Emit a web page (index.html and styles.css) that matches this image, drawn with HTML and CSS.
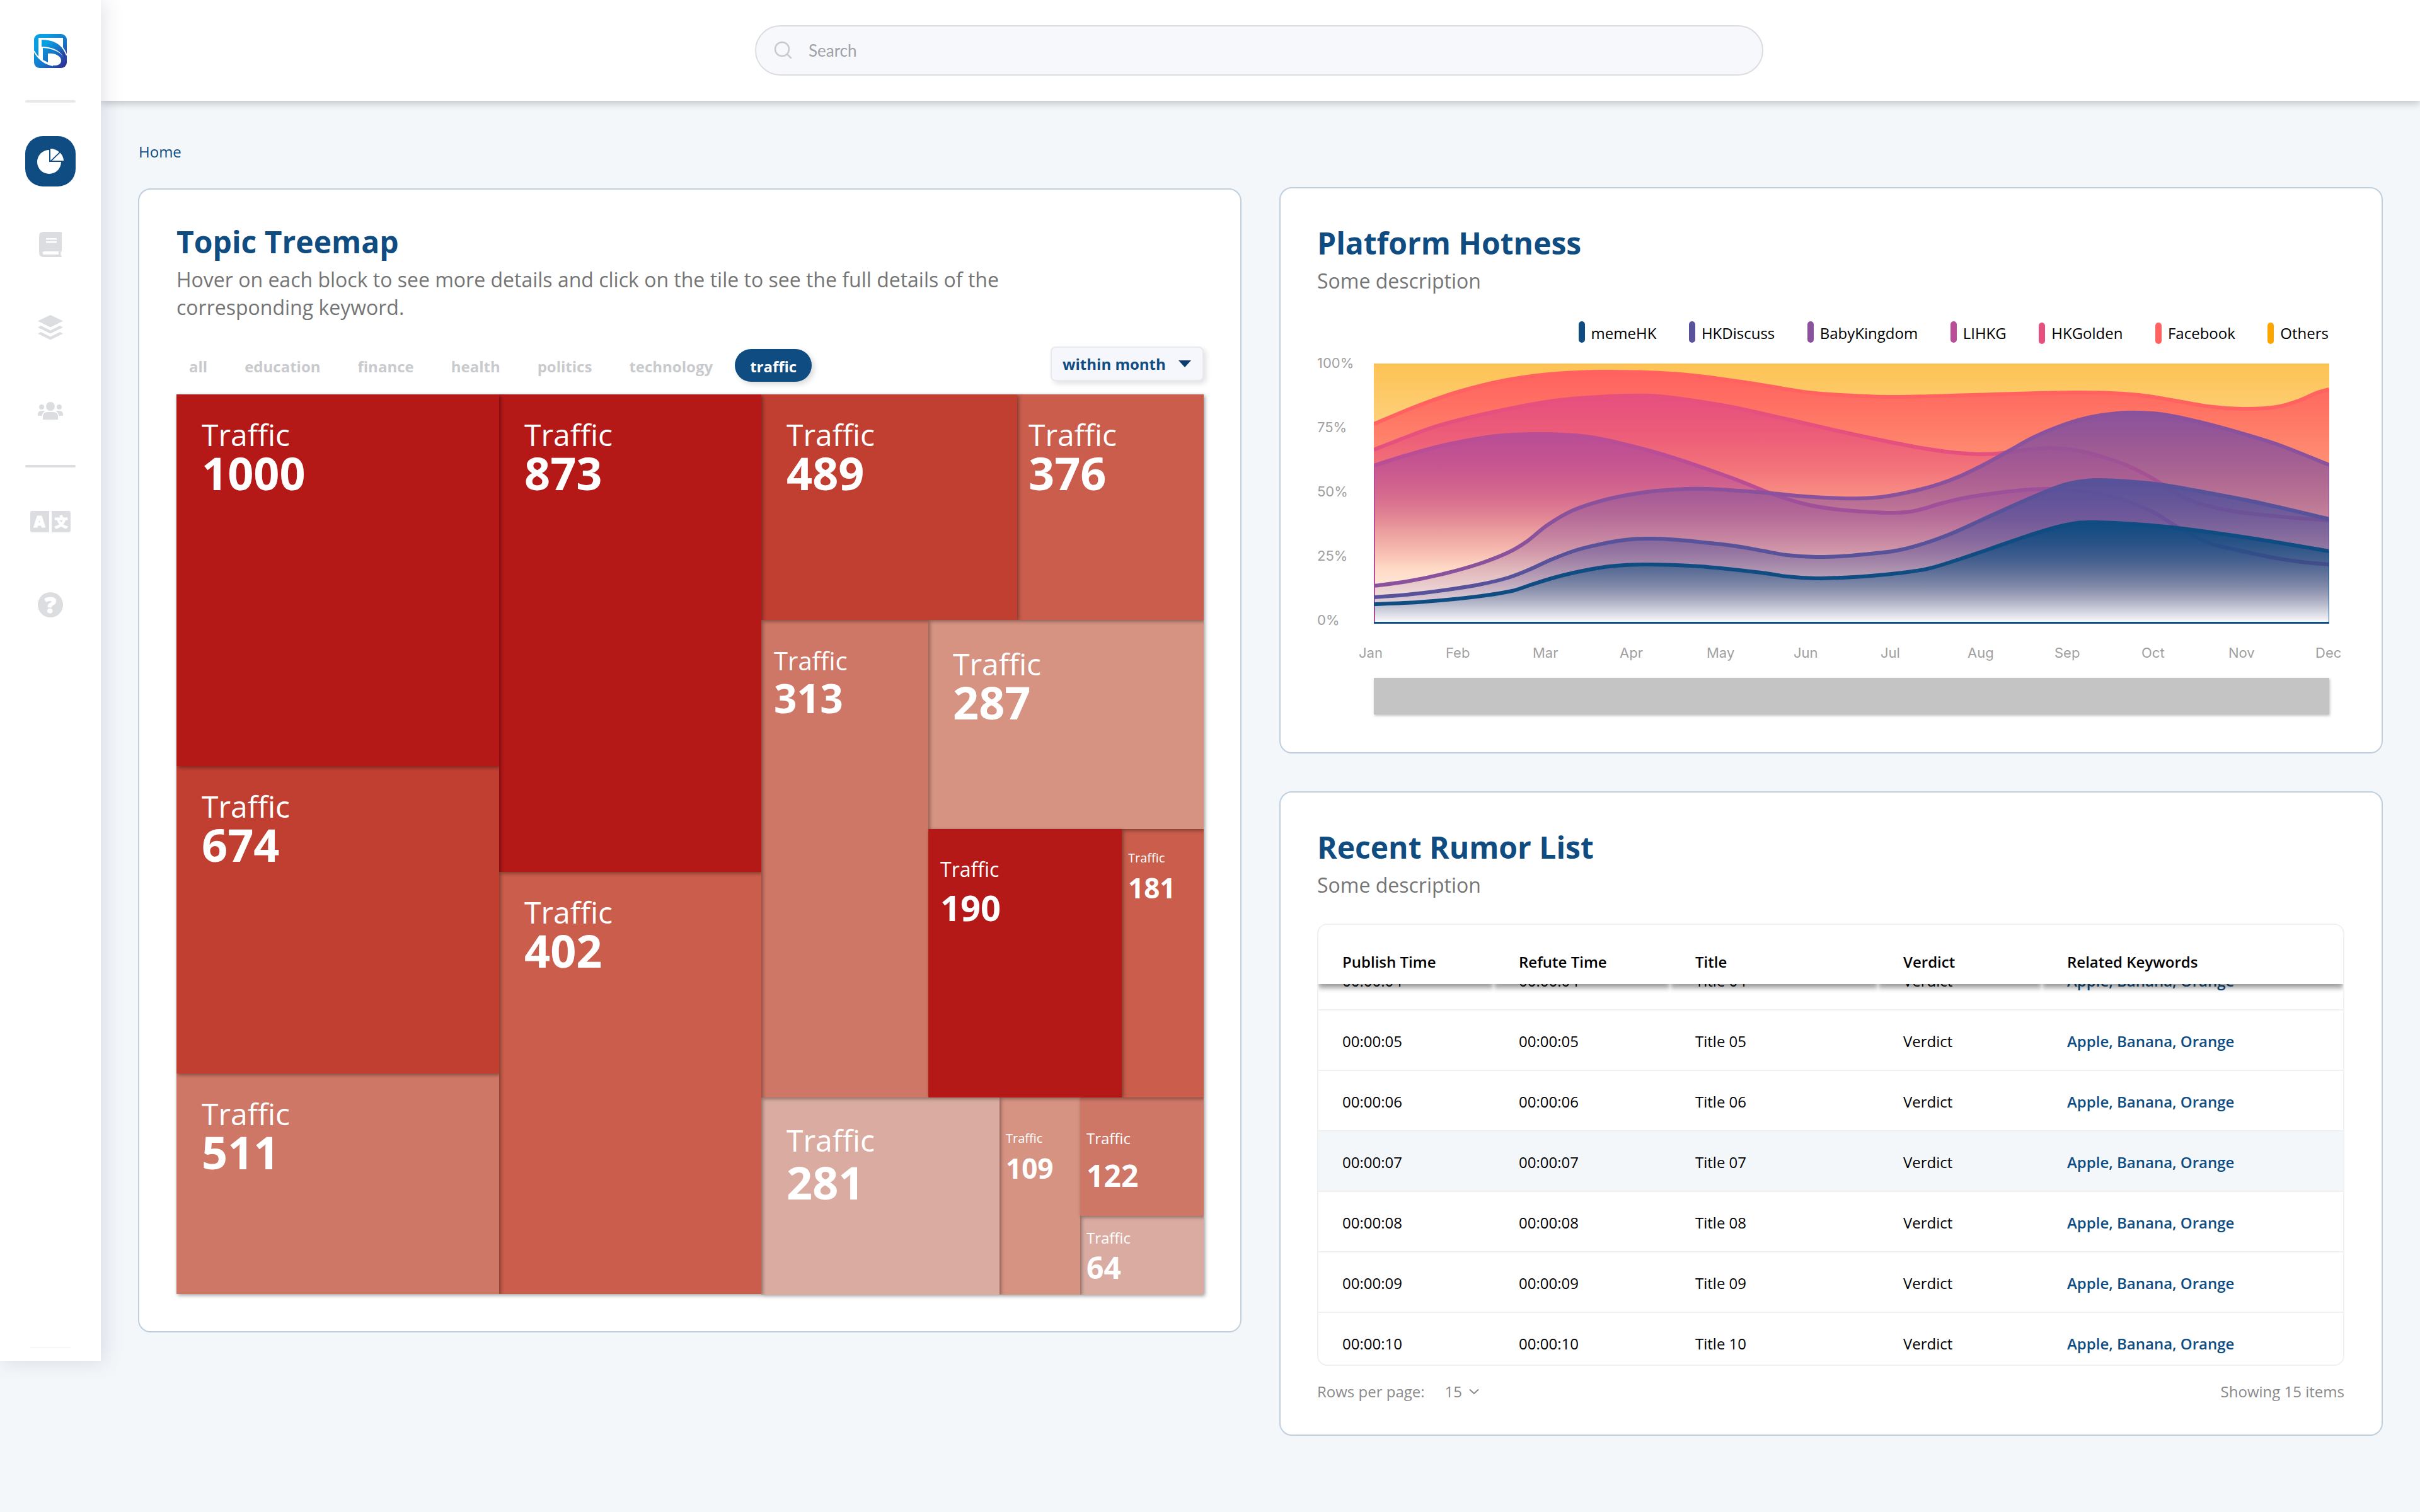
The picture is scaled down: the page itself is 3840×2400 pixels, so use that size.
FILE: index.html
```html
<!DOCTYPE html>
<html>
<head>
    <meta charset="utf-8">
    <title>Home</title>
    <link rel="stylesheet" href="styles.css">
</head>

<body>

<div class="sidebar">
    <svg class="logo" width="52" height="54" viewBox="0 0 52 54">
        <defs>
            <linearGradient id="logo_fill" x1="0" y1="0" x2="1" y2="1">
                <stop offset="0.2" stop-color="#069fe4"/>
                <stop offset="0.6" stop-color="#1674c6"/>
                <stop offset="1" stop-color="#33208c"/>
            </linearGradient>
        </defs>
        <rect width="52" height="54" rx="9" fill="url(#logo_fill)"/>
        <path fill="#fff" d="M7 6H46V24C39 14 28 9 12 9.500V20C27 20 40 25 48 37C41 28 29 23 14 22V41L22 45V31C33 30 43 35 43 42C43 50 34 52 22 48C14 44 11 42 7 37Z"/>
        <path fill="url(#logo_fill)" d="M12 9.500C28 9 40 15 48 30L49 38C40 25 27 19 12 18.500Z"/>
        <path fill="none" stroke="#fff" stroke-width="1.800" d="M0 27C6 39 17 48 30 50M45 21C48 25 50 29 52 34"/>
    </svg>
    <div class="line line_top"></div>
    <a class="nav active">
        <svg width="80" height="80" viewBox="0 0 80 80" fill="#fff">
            <path d="M38 22V41H57A19 19 0 1 1 38 22Z"/>
            <path d="M40 20A21 21 0 0 1 54 25.500L40 39Z"/>
            <path d="M55.500 26.500A20 20 0 0 1 61 39H42.500Z"/>
        </svg>
    </a>
    <a class="nav">
        <svg width="80" height="80" viewBox="0 0 80 80" fill="#dcdde0">
            <path fill-rule="evenodd" d="M29 20H55Q58 20 58 22V49Q58 51 56.500 51.500V57Q58 57.500 58 60H29Q22 60 22 53V27Q22 20 29 20ZM33 30H50V32.500H33ZM33 35H50V37.500H33ZM30 51H53V56H30Q27.500 56 27.500 53.500Q27.500 51 30 51Z"/>
        </svg>
    </a>
    <a class="nav">
        <svg width="80" height="80" viewBox="0 0 80 80" fill="#dcdde0">
            <path d="M40 20L60 29.500L40 39.500L20 29.500Z"/>
            <path d="M25 37L40 44.500L55 37L60 39.500L40 49.500L20 39.500Z"/>
            <path d="M25 47L40 54.500L55 47L60 49.500L40 59.500L20 49.500Z"/>
        </svg>
    </a>
    <a class="nav">
        <svg width="80" height="80" viewBox="0 0 80 80" fill="#dcdde0">
            <circle cx="40" cy="33" r="7"/>
            <circle cx="26" cy="34" r="4"/>
            <circle cx="54" cy="34" r="4"/>
            <path d="M28 54V50Q28 42 36 42H44Q52 42 52 50V54Z"/>
            <path d="M20 48V46Q20 40 26 40H28Q30 40 31 41Q27 44 26.500 48Z"/>
            <path d="M60 48V46Q60 40 54 40H52Q50 40 49 41Q53 44 53.500 48Z"/>
        </svg>
    </a>
    <div class="line"></div>
    <a class="nav language">
        <svg width="80" height="80" viewBox="0 0 80 80">
            <path fill="#dcdde0" d="M11 23H38V57H11Q8 57 8 54V26Q8 23 11 23ZM42 23H69Q72 23 72 26V54Q72 57 69 57H42Z"/>
            <text class="icon_text" x="22.500" y="49" font-size="25">A</text>
            <text class="icon_text" x="57" y="48" font-size="21">文</text>
        </svg>
    </a>
    <a class="nav help">
        <svg width="80" height="80" viewBox="0 0 80 80">
            <circle cx="40" cy="40" r="20" fill="#dcdde0"/>
            <text class="icon_text" x="40" y="53" font-size="36">?</text>
        </svg>
    </a>
    <div class="line line_bottom"></div>
</div>

<div class="page">
    <div class="header">
        <div class="search">
            <svg width="30" height="30" viewBox="0 0 30 30" fill="none" stroke="#c9cacd" stroke-width="2.500" stroke-linecap="round">
                <circle cx="13" cy="13" r="11"/>
                <path d="M21 21L27 27"/>
            </svg>
            <span>Search</span>
        </div>
    </div>

    <div class="main">
        <div class="breadcrumb">Home</div>
        <div class="columns">

            <div class="card card_treemap">
                <h2>Topic Treemap</h2>
                <p>Hover on each block to see more details and click on the tile to see the full details of the corresponding keyword.</p>
                <div class="toolbar">
                    <div class="tabs">
                        <span>all</span>
                        <span>education</span>
                        <span>finance</span>
                        <span>health</span>
                        <span>politics</span>
                        <span>technology</span>
                        <span class="selected">traffic</span>
                    </div>
                    <div class="select">within month
                        <svg width="20" height="11" viewBox="0 0 20 11"><path d="M0 0H20L10 11Z" fill="#0c3d6c"/></svg>
                    </div>
                </div>
                <div class="treemap">
                    <div class="tile t1000 heat1"><span>Traffic</span><b>1000</b></div>
                    <div class="tile t674 heat2"><span>Traffic</span><b>674</b></div>
                    <div class="tile t511 heat4"><span>Traffic</span><b>511</b></div>
                    <div class="tile t873 heat1"><span>Traffic</span><b>873</b></div>
                    <div class="tile t402 heat3"><span>Traffic</span><b>402</b></div>
                    <div class="tile t489 heat2"><span>Traffic</span><b>489</b></div>
                    <div class="tile t376 heat3"><span>Traffic</span><b>376</b></div>
                    <div class="tile t313 heat4"><span>Traffic</span><b>313</b></div>
                    <div class="tile t287 heat5"><span>Traffic</span><b>287</b></div>
                    <div class="tile t190 heat1"><span>Traffic</span><b>190</b></div>
                    <div class="tile t181 heat3"><span>Traffic</span><b>181</b></div>
                    <div class="tile t281 heat6"><span>Traffic</span><b>281</b></div>
                    <div class="tile t109 heat5"><span>Traffic</span><b>109</b></div>
                    <div class="tile t122 heat4"><span>Traffic</span><b>122</b></div>
                    <div class="tile t64 heat6"><span>Traffic</span><b>64</b></div>
                </div>
            </div>

            <div class="right">
                <div class="card card_hotness">
                    <h2>Platform Hotness</h2>
                    <p>Some description</p>
                    <ul class="legend">
                        <li class="meme">memeHK</li>
                        <li class="discuss">HKDiscuss</li>
                        <li class="baby">BabyKingdom</li>
                        <li class="lihkg">LIHKG</li>
                        <li class="golden">HKGolden</li>
                        <li class="facebook">Facebook</li>
                        <li class="others">Others</li>
                    </ul>
                    <div class="chart">
                        <div class="y_axis">
                            <span>100%</span>
                            <span>75%</span>
                            <span>50%</span>
                            <span>25%</span>
                            <span>0%</span>
                        </div>
                        <svg id="plot" width="1516" height="413" viewBox="0 0 1516 413"></svg>
                    </div>
                    <div class="x_axis">
                        <span>Jan</span><span>Feb</span><span>Mar</span><span>Apr</span>
                        <span>May</span><span>Jun</span><span>Jul</span><span>Aug</span>
                        <span>Sep</span><span>Oct</span><span>Nov</span><span>Dec</span>
                    </div>
                    <div class="range"></div>
                </div>

                <div class="card card_rumor">
                    <h2>Recent Rumor List</h2>
                    <p>Some description</p>
                    <div class="table">
                        <div class="row head">
                            <span>Publish Time</span><span>Refute Time</span><span>Title</span><span>Verdict</span><span>Related Keywords</span>
                        </div>
                        <div class="rows">
                            <div class="row"><span>00:00:04</span><span>00:00:04</span><span>Title 04</span><span>Verdict</span><span>Apple, Banana, Orange</span></div>
                            <div class="row"><span>00:00:05</span><span>00:00:05</span><span>Title 05</span><span>Verdict</span><span>Apple, Banana, Orange</span></div>
                            <div class="row"><span>00:00:06</span><span>00:00:06</span><span>Title 06</span><span>Verdict</span><span>Apple, Banana, Orange</span></div>
                            <div class="row hover"><span>00:00:07</span><span>00:00:07</span><span>Title 07</span><span>Verdict</span><span>Apple, Banana, Orange</span></div>
                            <div class="row"><span>00:00:08</span><span>00:00:08</span><span>Title 08</span><span>Verdict</span><span>Apple, Banana, Orange</span></div>
                            <div class="row"><span>00:00:09</span><span>00:00:09</span><span>Title 09</span><span>Verdict</span><span>Apple, Banana, Orange</span></div>
                            <div class="row"><span>00:00:10</span><span>00:00:10</span><span>Title 10</span><span>Verdict</span><span>Apple, Banana, Orange</span></div>
                        </div>
                    </div>
                    <div class="pager">
                        <span>Rows per page:</span>
                        <span class="page_size">15</span>
                        <svg width="16" height="10" viewBox="0 0 16 10" fill="none" stroke="#8a8a8a" stroke-width="2"><path d="M1 1.500L8 8L15 1.500"/></svg>
                        <span class="total">Showing 15 items</span>
                    </div>
                </div>
            </div>

        </div>
    </div>
</div>

<script>
    // series are painted from back to front, every point is x, y inside the plot
    var series = [
        {color: '#ff6261', top: 14, end: 390, points: [0,96, 70,67, 137,44, 212,26, 290,16, 378,13, 487,17, 596,31, 690,46, 760,51, 835,53, 950,50, 1110,46, 1214,50, 1323,68, 1380,72, 1432,69, 1470,58, 1495,47, 1516,41]},
        {color: '#e5507f', top: 51, end: 265, points: [0,137, 51,117, 108,97, 194,76, 286,59, 355,53, 436,51, 487,56, 568,69, 654,88, 750,110, 852,131, 909,140, 967,144, 1007,141, 1041,136, 1076,134, 1116,138, 1156,148, 1196,162, 1237,183, 1285,213, 1328,227, 1374,236, 1438,243, 1516,249]},
        {color: '#b94e96', top: 112, end: 325, points: [0,162, 51,146, 114,129, 194,115, 266,112, 338,116, 401,129, 477,150, 569,182, 632,207, 684,223, 730,231, 777,235, 823,237, 858,234, 904,221, 950,211, 1041,200, 1100,200, 1168,210, 1202,221, 1237,236, 1271,257, 1300,273, 1328,286, 1374,297, 1426,308, 1472,315, 1516,319]},
        {color: '#8a529c', top: 78, end: 412, points: [0,353, 52,346, 110,334, 167,318, 213,300, 242,283, 276,256, 316,233, 368,216, 425,205, 477,200, 529,199, 580,202, 632,206, 684,211, 741,214, 774,214, 812,211, 858,202, 898,191, 932,178, 967,161, 1007,139, 1047,117, 1087,100, 1133,86, 1179,79, 1214,78, 1254,81, 1311,93, 1374,110, 1438,130, 1516,161]},
        {color: '#57529a', top: 185, end: 412, points: [0,371, 52,367, 110,360, 167,351, 213,340, 247,327, 282,311, 322,296, 368,285, 408,279, 443,278, 483,280, 523,284, 569,289, 615,297, 655,304, 701,307, 741,306, 777,303, 829,297, 875,285, 921,268, 978,242, 1036,216, 1082,197, 1110,189, 1145,185, 1196,187, 1254,193, 1328,206, 1409,222, 1516,247]},
        {color: '#0f4c81', top: 252, end: 412, points: [0,382, 69,379, 127,374, 178,368, 219,361, 247,352, 282,341, 322,331, 374,322, 430,319, 517,322, 615,332, 655,338, 701,341, 740,340, 777,338, 830,333, 878,326, 925,312, 978,294, 1036,274, 1082,260, 1116,253, 1145,252, 1208,255, 1283,262, 1397,278, 1516,298]}
    ];

    // smooth line through all the points
    function curve(p) {
        var n = p.length / 2;
        var d = 'M' + p[0] + ' ' + p[1];
        for (var i = 0; i < n - 1; i++) {
            var a = Math.max(i - 1, 0) * 2, b = i * 2, c = b + 2, e = Math.min(i + 2, n - 1) * 2;
            d += 'C' + [
                p[b] + (p[c] - p[a]) / 6, p[b + 1] + (p[c + 1] - p[a + 1]) / 6,
                p[c] - (p[e] - p[b]) / 6, p[c + 1] - (p[e + 1] - p[b + 1]) / 6,
                p[c], p[c + 1]
            ].join(' ');
        }
        return d;
    }

    function gradient(id, color, top, end) {
        return '<linearGradient id="' + id + '" gradientUnits="userSpaceOnUse" x1="0" x2="0" y1="' + top + '" y2="' + end + '">' +
            '<stop offset="0" stop-color="' + color + '"/>' +
            '<stop offset="1" stop-color="' + color + '" stop-opacity="0"/></linearGradient>';
    }

    var svg = gradient('area_others', '#fdc253', 0, 412) + '<rect width="1516" height="413" fill="url(#area_others)"/>';
    series.forEach(function(s, i) {
        var d = curve(s.points);
        svg += gradient('area' + i, s.color, s.top, s.end);
        svg += '<path d="' + d + 'V413H0Z" fill="url(#area' + i + ')"/>';
        svg += '<path d="' + d + '" fill="none" stroke="' + s.color + '" stroke-width="6"/>';
        if (i === 2) svg += '<path d="M1 162V413" stroke="#b94e96" stroke-width="2"/>';
    });
    svg += '<path d="M1515.5 161V247" stroke="#8a529c"/>';
    svg += '<path d="M1515.5 247V298" stroke="#57529a"/>';
    svg += '<path d="M1515.5 298V413" stroke="#0f4c81"/>';
    svg += '<path d="M0 411.5H1516" stroke="#0f4c81" stroke-width="3"/>';
    document.getElementById('plot').innerHTML = svg;
</script>
</body>
</html>
```

FILE: styles.css
```css
* {
    box-sizing: border-box;
}
body {
    margin: 0;
    display: flex;
    align-items: flex-start;
    height: 2400px;
    overflow: hidden;
    background: #f3f7fa;
    font-family: "Open Sans", "Noto Sans", sans-serif;
    font-size: 24px;
    line-height: 33px;
    color: #000;
}
h2, p, ul {
    margin: 0;
    padding: 0;
}
svg {
    display: block;
    flex: none;
}

/* sidebar */
.sidebar {
    display: flex;
    flex-direction: column;
    align-items: center;
    flex: none;
    width: 160px;
    height: 2160px;
    background: #fff;
    box-shadow: 4px 0 30px rgba(90, 90, 130, .18);
    position: relative;
    z-index: 2;
}
.logo {
    margin-top: 54px;
}
.line {
    width: 80px;
    height: 4px;
    border-radius: 2px;
    background: #dcdde0;
    margin-top: 46px;
}
.line_top {
    margin: 51px 0 1px;
    background: #e9e9eb;
}
.line_bottom {
    margin: auto 0 20px;
    width: 64px;
    height: 2px;
    background: #f6f6f7;
}
.nav {
    width: 80px;
    height: 80px;
    border-radius: 28px;
    margin-top: 52px;
}
.nav.active {
    background: #0f4c81;
}
.nav.language {
    margin-top: 46px;
}
.icon_text {
    fill: #fff;
    stroke: #fff;
    font-family: "Open Sans", "Noto Sans CJK TC", sans-serif;
    font-weight: 800;
    text-anchor: middle;
}

/* header */
.page {
    flex: 1;
}
.header {
    height: 160px;
    display: flex;
    justify-content: center;
    align-items: center;
    background: #fff;
    box-shadow: 0 4px 12px rgba(0, 0, 0, .22);
}
.search {
    display: flex;
    align-items: center;
    gap: 25px;
    width: 1600px;
    height: 80px;
    margin-right: 4px;
    padding-left: 28px;
    border: 2px solid #dcdde0;
    border-radius: 40px;
    background: #f6f8fc;
    color: #9ea2a8;
    font-family: Lato, sans-serif;
    font-size: 26px;
}

.main {
    padding: 64px 59px 0;
}
.breadcrumb {
    padding-left: 1px;
    color: #0f4c81;
}
.columns {
    display: flex;
    align-items: flex-start;
    gap: 60px;
    margin-top: 40px;
}
.right {
    display: flex;
    flex-direction: column;
    gap: 60px;
}

/* cards */
.card {
    width: 1751px;
    padding: 54px 59px 0 58px;
    border: 2px solid #c0cfdd;
    border-radius: 20px;
    background: #fff;
}
.card h2 {
    font-size: 48px;
    line-height: 66px;
    color: #0f4c81;
}
.card p {
    width: 1340px;
    margin-top: 5px;
    font-size: 32px;
    line-height: 44px;
    color: #757575;
}
.card_treemap {
    height: 1816px;
    margin-top: 2px;
    padding: 50px 58px 0 59px;
}
.card_hotness {
    height: 899px;
}
.card_rumor {
    height: 1023px;
}

/* treemap */
.toolbar {
    display: flex;
    justify-content: space-between;
    height: 55px;
    margin: 40px 0 21px;
    font-weight: bold;
}
.tabs {
    display: flex;
    gap: 11px;
    margin: 4px 0 0 -4px;
    color: #c9cacd;
}
.tabs span {
    height: 52px;
    padding: 0 24px;
    border-radius: 26px;
    line-height: 55px;
}
.tabs .selected {
    background: #0f4c81;
    color: #fff;
    box-shadow: 4px 4px 8px rgba(0, 0, 0, .15);
}
.select {
    display: flex;
    align-items: center;
    gap: 20px;
    width: 243px;
    height: 55px;
    padding: 0 0 0 17px;
    border: 2px solid #e9e9ee;
    border-radius: 8px;
    background: #f6f7fc;
    color: #0f4c81;
    white-space: nowrap;
    box-shadow: 4px 4px 8px rgba(0, 0, 0, .12);
}
.treemap {
    display: grid;
    width: 1630px;
    grid-template-columns: 512px 416px 265px 113px 28px 100px 66px 130px;
    grid-template-rows: 358px 232px 100px 68px 320px 38px 188px 125px;
}
.tile {
    position: relative;
    padding: 31px 0 0 40px;
    color: #fff;
    box-shadow: 2px 2px 6px rgba(0, 0, 0, .4);
}
.tile span {
    display: block;
    font-size: 48px;
    line-height: 66px;
}
.tile b {
    display: block;
    font-size: 72px;
    line-height: 54px;
}
.heat1 { background: #b41817; }
.heat2 { background: #c03f31; }
.heat3 { background: #ca5d4b; }
.heat4 { background: #cf7766; }
.heat5 { background: #d69382; }
.heat6 { background: #daaca1; }

/* row start / column start / row end / column end */
.t1000 { grid-area: 1 / 1 / 3 / 2; z-index: 9; }
.t674 { grid-area: 3 / 1 / 6 / 2; z-index: 8; }
.t511 { grid-area: 6 / 1 / 9 / 2; z-index: 7; margin-bottom: 1px; }
.t873 { grid-area: 1 / 2 / 5 / 3; z-index: 7; }
.t402 { grid-area: 5 / 2 / 9 / 3; z-index: 6; margin-bottom: 1px; }
.t489 { grid-area: 1 / 3 / 2 / 6; z-index: 6; }
.t376 { grid-area: 1 / 6 / 2 / 9; z-index: 5; padding-left: 18px; }
.t313 { grid-area: 2 / 3 / 7 / 4; z-index: 4; padding: 38px 0 0 20px; }
.t287 { grid-area: 2 / 4 / 4 / 9; z-index: 3; padding: 37px 0 0 39px; }
.t190 { grid-area: 4 / 4 / 7 / 8; z-index: 4; padding: 42px 0 0 19px; }
.t181 { grid-area: 4 / 8 / 7 / 9; z-index: 2; padding: 32px 0 0 10px; }
.t281 { grid-area: 7 / 3 / 9 / 5; z-index: 2; padding-top: 35px; }
.t109 { grid-area: 7 / 5 / 9 / 7; z-index: 1; padding: 51px 0 0 10px; }
.t122 { grid-area: 7 / 7 / 8 / 9; z-index: 1; padding: 48px 0 0 10px; }
.t64 { grid-area: 8 / 7 / 9 / 9; padding: 18px 0 0 10px; }
.t281 b { line-height: 67px; }
.t313 span { font-size: 40px; line-height: 54px; }
.t313 b { font-size: 64px; line-height: 64px; }
.t190 span { font-size: 32px; line-height: 44px; }
.t190 b { font-size: 56px; line-height: 76px; }
.t181 span, .t109 span { font-size: 20px; line-height: 27px; }
.t181 b, .t109 b { font-size: 44px; line-height: 69px; }
.t122 span, .t64 span { font-size: 24px; line-height: 33px; }
.t122 b { font-size: 48px; line-height: 86px; }
.t64 b { font-size: 48px; line-height: 62px; }

/* chart */
.legend {
    display: flex;
    justify-content: flex-end;
    gap: 51.500px;
    height: 34px;
    margin: 42px 25px 0 0;
    list-style: none;
}
.legend li {
    display: flex;
    gap: 10px;
    line-height: 37px;
}
.legend li:before {
    content: "";
    width: 10px;
    height: 34px;
    border-radius: 5px;
    background: currentColor;
}
.legend li.meme:before { background: #0f4c81; }
.legend li.discuss:before { background: #57529a; }
.legend li.baby:before { background: #8a529c; }
.legend li.lihkg:before { background: #b94e96; }
.legend li.golden:before { background: #e5507f; }
.legend li.facebook:before { background: #ff6261; }
.legend li.others:before { background: #fba500; }
.legend li.golden:before, .legend li.facebook:before, .legend li.others:before {
    margin-top: 2px;
}
.chart {
    display: flex;
    height: 432px;
    margin-top: 20px;
}
.y_axis {
    display: flex;
    flex-direction: column;
    justify-content: space-between;
    width: 90px;
}
.y_axis, .x_axis {
    font-family: Inter, sans-serif;
    font-size: 22px;
    line-height: 24px;
    color: #a0a0a0;
}
#plot {
    margin-top: 13px;
}
.x_axis {
    display: grid;
    grid-template-columns: repeat(12, 138px);
    margin: 28px -60px 0 66px;
}
.range {
    width: 1516px;
    height: 58px;
    margin: 28px 0 0 90px;
    background: #c4c4c4;
    box-shadow: 1px 2px 4px rgba(0, 0, 0, .25);
}

/* table */
.table {
    width: 1630px;
    height: 702px;
    margin-top: 39px;
    border: 2px solid #f0f0f0;
    border-radius: 16px;
    overflow: hidden;
}
.row {
    display: grid;
    grid-template-columns: 278px 280px 330px 260px 1fr;
    height: 96px;
    border-bottom: 2px solid #f0f0f0;
}
.row span {
    padding: 32px 0 0 40px;
}
.row span:first-child {
    padding-left: 38px;
}
.row span:last-child {
    color: #0f4c81;
    font-weight: 600;
}
.row.hover {
    background: #f3f7fa;
}
.row.head {
    position: relative;
    z-index: 1;
    height: 94px;
    border: 0;
}
.row.head span {
    padding-top: 42px;
    background: #fff;
    color: #000;
    font-weight: 600;
    box-shadow: 0 6px 8px rgba(0, 0, 0, .4);
    clip-path: inset(0 0 -20px 0);
}
.rows {
    margin-top: -54px;
}
.pager {
    display: flex;
    align-items: center;
    width: 1630px;
    margin-top: 24px;
    color: #8a8a8a;
}
.page_size {
    margin: 0 11px 0 32px;
}
.total {
    margin-left: auto;
}
```
